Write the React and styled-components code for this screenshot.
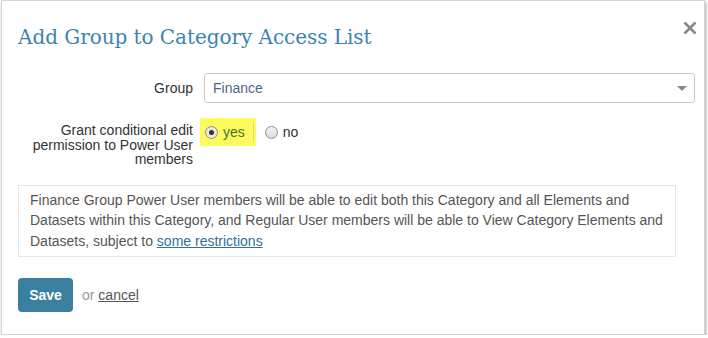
import React from "react";
import styled, { createGlobalStyle } from "styled-components";

const GlobalStyle = createGlobalStyle`
  html, body {
    margin: 0;
    padding: 0;
    background: #fff;
  }
  body {
    font-family: "Liberation Sans", Arial, sans-serif;
  }
`;

const Dialog = styled.div`
  box-sizing: border-box;
  width: 704px;
  height: 335px;
  margin-left: 1px;
  border: 1px solid #d4d4d4;
  box-shadow: 1px 2px 3px rgba(0, 0, 0, 0.35);
  background: #fff;
  padding: 0 9px 0 16px;
`;

const Header = styled.div`
  display: flex;
  align-items: flex-start;
  justify-content: space-between;
  padding-top: 30px;
  height: 72px;
  box-sizing: border-box;
`;

const Title = styled.h3`
  margin: -7px 0 0 0;
  font-family: "DejaVu Serif", "Liberation Serif", serif;
  font-weight: normal;
  font-size: 20px;
  line-height: 26px;
  color: #3c84b0;
  letter-spacing: -0.05px;
`;

const Close = styled.button`
  border: 0;
  background: none;
  padding: 0;
  margin: -11px -3px 0 0;
  width: 16px;
  height: 16px;
  cursor: pointer;
  display: flex;
  align-items: center;
  justify-content: center;
`;

const FormRow = styled.div`
  display: grid;
  grid-template-columns: 175px 1fr;
  column-gap: 11px;
  align-items: ${(p) => p.align || "center"};
  margin-bottom: ${(p) => p.gap || 0}px;
`;

const Label = styled.label`
  text-align: right;
  font-size: 14px;
  line-height: 14.5px;
  color: #333;
  padding-top: ${(p) => p.top || 0}px;
`;

const Select = styled.div`
  box-sizing: border-box;
  height: 30px;
  border: 1px solid #cacaca;
  border-radius: 3px;
  display: flex;
  align-items: center;
  justify-content: space-between;
  padding: 0 7px 0 8px;
  font-size: 14px;
  color: #4e6a82;
`;

const Caret = styled.span`
  width: 0;
  height: 0;
  border-left: 5px solid transparent;
  border-right: 5px solid transparent;
  border-top: 5px solid #888;
  margin-top: 1px;
`;

const Radios = styled.div`
  display: flex;
  align-items: center;
  margin-left: -4px;
`;

const Highlight = styled.div`
  display: flex;
  align-items: center;
  background: #fbfb5e;
  height: 28px;
  padding: 0 2px 0 5px;
`;

const RadioOption = styled.span`
  display: inline-flex;
  align-items: center;
  gap: 5px;
  font-size: 14px;
  color: ${(p) => p.color || "#333"};
  margin-left: ${(p) => p.offset || 0}px;
`;

const RadioDot = styled.span`
  box-sizing: border-box;
  width: 13px;
  height: 13px;
  border-radius: 50%;
  border: 1px solid #8f8f8f;
  background: ${(p) => (p.checked ? "#e9e9d9" : "linear-gradient(#f4f4f4, #dcdcdc)")};
  display: flex;
  align-items: center;
  justify-content: center;
  &::after {
    content: "";
    display: ${(p) => (p.checked ? "block" : "none")};
    width: 5px;
    height: 5px;
    border-radius: 50%;
    background: #333;
  }
`;

const Divider = styled.span`
  width: 1px;
  height: 20px;
  background: #d8d8a0;
  margin-left: 8px;
`;

const InfoBox = styled.div`
  box-sizing: border-box;
  width: 658px;
  margin-top: 18px;
  border: 1px solid #e6e6e6;
  padding: 4px 11px 5px 11px;
  font-size: 14px;
  line-height: 20.5px;
  color: #555;
`;

const Link = styled.a`
  color: ${(p) => p.color || "#2f6f99"};
  text-decoration: underline;
`;

const Actions = styled.div`
  display: flex;
  align-items: center;
  gap: 9px;
  margin-top: 21px;
  font-size: 14px;
`;

const SaveButton = styled.button`
  box-sizing: border-box;
  width: 55px;
  height: 34px;
  border: 0;
  border-radius: 4px;
  background: #3a7fa0;
  color: #fff;
  font-family: "Liberation Sans", Arial, sans-serif;
  font-weight: bold;
  font-size: 14px;
`;

const Muted = styled.span`
  color: #999;
`;

export default function App() {
  return (
    <>
      <GlobalStyle />
      <Dialog>
        <Header>
          <Title>Add Group to Category Access List</Title>
          <Close aria-label="close">
            <svg width="14" height="14" viewBox="0 0 14 14">
              <path d="M1.5 1.5 L12.5 12.5 M12.5 1.5 L1.5 12.5" stroke="#888" strokeWidth="2.6" />
            </svg>
          </Close>
        </Header>
        <FormRow gap={15}>
          <Label>Group</Label>
          <Select>
            <span>Finance</span>
            <Caret />
          </Select>
        </FormRow>
        <FormRow align="start">
          <Label top={5}>
            Grant conditional edit
            <br />
            permission to Power User
            <br />
            members
          </Label>
          <Radios>
            <Highlight>
              <RadioOption color="#4a7428">
                <RadioDot checked />
                yes
              </RadioOption>
              <Divider />
            </Highlight>
            <RadioOption offset={9}>
              <RadioDot />
              no
            </RadioOption>
          </Radios>
        </FormRow>
        <InfoBox>
          Finance Group Power User members will be able to edit both this Category and all Elements and
          Datasets within this Category, and Regular User members will be able to View Category Elements and
          Datasets, subject to <Link href="#">some restrictions</Link>
        </InfoBox>
        <Actions>
          <SaveButton>Save</SaveButton>
          <span>
            <Muted>or</Muted> <Link href="#" color="#555">cancel</Link>
          </span>
        </Actions>
      </Dialog>
    </>
  );
}
